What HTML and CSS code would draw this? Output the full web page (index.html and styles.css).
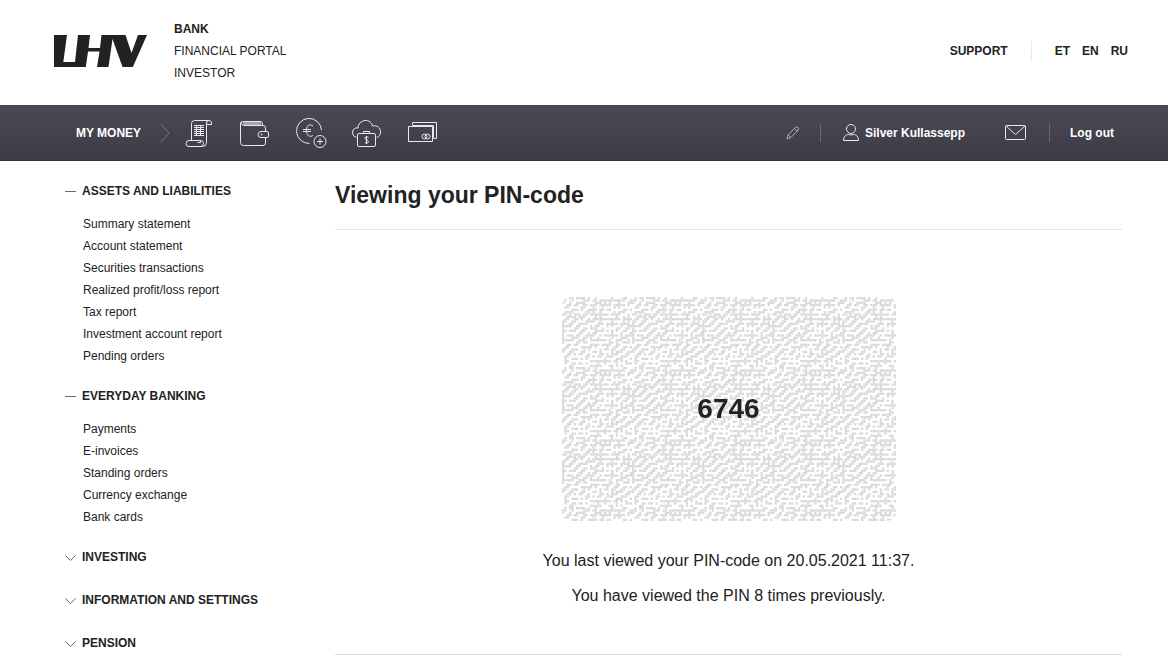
FILE: index.html
```html
<!DOCTYPE html>
<html lang="en">
<head>
  <meta charset="utf-8">
  <title>LHV - Viewing your PIN-code</title>
  <link rel="stylesheet" href="styles.css">
</head>
<body>
  <header class="header">
    <a class="logo" href="#" aria-label="LHV">
      <svg width="93" height="32" viewBox="0 0 93 32" fill="#222">
        <path d="M0 0H13L9.300 27H21L24 0H36L34.500 13H46L47.500 0H71.500L77.500 18L84 0H93L78.800 32H68.500L58.500 4L54.500 32H43L45.500 16.500H34L31.800 32H0Z"/>
      </svg>
    </a>
    <nav class="portals">
      <a class="active" href="#">BANK</a>
      <a href="#">FINANCIAL PORTAL</a>
      <a href="#">INVESTOR</a>
    </nav>
    <div class="header-right">
      <a class="support" href="#">SUPPORT</a>
      <div class="languages">
        <a href="#">ET</a>
        <a href="#">EN</a>
        <a href="#">RU</a>
      </div>
    </div>
  </header>

  <nav class="navbar">
    <a class="my-money" href="#">MY MONEY</a>
    <svg class="arrow" width="10" height="20" viewBox="0 0 10 20"><path d="M0.500 0.500L9 10L0.500 19.500"/></svg>
    <div class="shortcuts">
      <a href="#" aria-label="Account statement">
        <svg class="icon" width="32" height="32" viewBox="0 0 32 32">
          <path d="M7.500 23.500V6.500a3 3 0 0 1 3-3H25a2.500 2.500 0 0 1 2.500 2.500v1.500h-5V6a2.500 2.500 0 0 1 2.500-2.500M22.500 5v20.500a4 4 0 0 1-4 4H5a3 3 0 0 1 0-6h11.500v2h-3M16.500 23.500a3 3 0 0 1 0 6"/>
          <path d="M10 8.500h10M10 10.500h10M10 12.500h10M10 14.500h10M10 16.500h10M10 18.500h10M12.500 8v11M16.500 8v11"/>
        </svg>
      </a>
      <a href="#" aria-label="Payments">
        <svg class="icon" width="32" height="32" viewBox="0 0 32 32">
          <path d="M25.500 14V11a2.500 2.500 0 0 0-2.500-2.500H4a3.500 3.500 0 0 1-3-3.500M25.500 21v5a2.500 2.500 0 0 1-2.500 2.500H3.500A3 3 0 0 1 0.500 25.500V6.500a2 2 0 0 1 2-2H20a2.500 2.500 0 0 1 2.500 2.500v1.500"/>
          <path d="M21 14.500h6a1.500 1.500 0 0 1 1.500 1.500v3a1.500 1.500 0 0 1-1.500 1.500h-6a3 3 0 0 1 0-6Z"/>
          <path class="shade" d="M3 5h18v3H3z"/>
          <circle cx="21.500" cy="17.500" r="0.500"/>
        </svg>
      </a>
      <a href="#" aria-label="New payment">
        <svg class="icon" width="32" height="32" viewBox="0 0 32 32">
          <path d="M13.500 26.400A12.500 12.500 0 1 1 25.500 13"/>
          <path d="M17 9c-4-2.500-6.500-.5-6.500 4.500s3 7 6.500 5M7 12.500h8M7 14.500h8"/>
          <circle cx="24" cy="24.500" r="6"/>
          <path d="M21 24.500h6M24 21.500v6"/>
        </svg>
      </a>
      <a href="#" aria-label="Investments">
        <svg class="icon" width="32" height="32" viewBox="0 0 32 32">
          <path d="M4.500 20.500a5 5 0 0 1-1-9.500h2.500c0-4 3-7 7-7.500s7 2.500 7.500 5.500c5-1 8 2 8 5.500a6 6 0 0 1-4 6"/>
          <path d="M7 16.500h15a1.500 1.500 0 0 1 1.500 1.500v10a1.500 1.500 0 0 1-1.500 1.500H7a1.500 1.500 0 0 1-1.500-1.500V18A1.500 1.500 0 0 1 7 16.500ZM11.500 16v-1.500h6V16"/>
          <path d="M16.500 20.500c-2-1.500-4-.5-3.500 1s3.500 1.500 3.500 3-2 2-3.500 1M14.500 19v8"/>
        </svg>
      </a>
      <a href="#" aria-label="Bank cards">
        <svg class="icon" width="32" height="32" viewBox="0 0 32 32">
          <path d="M4.500 8V5.500h24v16h-3M4.500 8.500h21v13"/>
          <path d="M0.500 9.500h24v15h-24z"/>
          <circle cx="16.500" cy="19.500" r="2.500"/>
          <circle cx="19.500" cy="19.500" r="2.500"/>
        </svg>
      </a>
    </div>
    <div class="user-menu">
      <a class="edit" href="#" aria-label="Edit">
        <svg class="icon dim" width="14" height="14" viewBox="0 0 14 14"><path d="M1 13l1-4L10 1q2-.5 3 2L5 11.500zM8.500 2.500l3 3M2 9l3 2.500"/></svg>
      </a>
      <a class="user" href="#">
        <svg class="icon" width="16" height="18" viewBox="0 0 16 18"><circle cx="8" cy="5" r="4.500"/><path d="M0.500 16.500c0-4 2.500-6 5-6q2.500 1 5 0c2.500 0 5 2 5 6z"/></svg>
        Silver Kullassepp
      </a>
      <a class="messages" href="#" aria-label="Messages">
        <svg class="icon" width="22" height="16" viewBox="0 0 22 16"><rect x="0.500" y="0.500" width="20" height="14" rx="1"/><path d="M1 1l9.500 8.500L20 1"/></svg>
      </a>
      <a class="logout" href="#">Log out</a>
    </div>
  </nav>

  <div class="page">
    <aside class="sidebar">
      <section class="menu open">
        <button type="button" aria-expanded="true"><svg width="11" height="7" viewBox="0 0 11 7"><path d="M0 3.500h11"/></svg>ASSETS AND LIABILITIES</button>
        <ul>
          <li><a href="#">Summary statement</a></li>
          <li><a href="#">Account statement</a></li>
          <li><a href="#">Securities transactions</a></li>
          <li><a href="#">Realized profit/loss report</a></li>
          <li><a href="#">Tax report</a></li>
          <li><a href="#">Investment account report</a></li>
          <li><a href="#">Pending orders</a></li>
        </ul>
      </section>
      <section class="menu open">
        <button type="button" aria-expanded="true"><svg width="11" height="7" viewBox="0 0 11 7"><path d="M0 3.500h11"/></svg>EVERYDAY BANKING</button>
        <ul>
          <li><a href="#">Payments</a></li>
          <li><a href="#">E-invoices</a></li>
          <li><a href="#">Standing orders</a></li>
          <li><a href="#">Currency exchange</a></li>
          <li><a href="#">Bank cards</a></li>
        </ul>
      </section>
      <section class="menu">
        <button type="button" aria-expanded="false"><svg width="11" height="7" viewBox="0 0 11 7"><path d="M0.500 1.500l5 5 5-5"/></svg>INVESTING</button>
      </section>
      <section class="menu">
        <button type="button" aria-expanded="false"><svg width="11" height="7" viewBox="0 0 11 7"><path d="M0.500 1.500l5 5 5-5"/></svg>INFORMATION AND SETTINGS</button>
      </section>
      <section class="menu">
        <button type="button" aria-expanded="false"><svg width="11" height="7" viewBox="0 0 11 7"><path d="M0.500 1.500l5 5 5-5"/></svg>PENSION</button>
      </section>
    </aside>

    <main class="content">
      <h1>Viewing your PIN-code</h1>
      <div class="pin-view">
        <div class="pin-card">
          <canvas id="pin-noise" width="334" height="224"></canvas>
          <strong class="pin">6746</strong>
        </div>
        <p>You last viewed your PIN-code on 20.05.2021 11:37.</p>
        <p>You have viewed the PIN 8 times previously.</p>
      </div>
    </main>
  </div>

  <script src="noise.js"></script>
</body>
</html>
```

FILE: styles.css
```css
* {
  box-sizing: border-box;
}

body {
  margin: 0;
  background: #fff;
  color: #222;
  font-family: "Liberation Sans", Arial, sans-serif;
  font-size: 12px;
  line-height: 22px;
}

a {
  color: inherit;
  text-decoration: none;
}

svg {
  display: block;
  flex: none;
}

.header {
  display: flex;
  align-items: center;
  padding: 18px 40px 21px 54px;
}

.logo {
  margin-right: 27px;
}

.portals {
  display: flex;
  flex-direction: column;
}

.portals .active {
  font-weight: bold;
}

.header-right {
  display: flex;
  align-items: center;
  margin-left: auto;
  font-weight: bold;
}

.support {
  padding-right: 23px;
}

.languages {
  display: flex;
  gap: 12px;
  padding-left: 23px;
  border-left: 1px solid #e8e8e8;
  line-height: 20px;
}

.navbar {
  display: flex;
  align-items: center;
  height: 56px;
  padding: 0 54px 0 76px;
  background: linear-gradient(#4a4955, #3d3b46);
  border-bottom: 1px solid #34323c;
  color: #fff;
  font-weight: bold;
}

.arrow {
  margin: 0 14px 0 19px;
  fill: none;
  stroke: #777681;
}

.shortcuts {
  display: flex;
  gap: 24px;
}

.icon {
  fill: none;
  stroke: #e9e9ec;
  stroke-linejoin: round;
}

.icon .shade {
  fill: #a5a4ab;
  stroke: none;
}

.icon.dim {
  stroke: #aaa9b1;
}

.user-menu {
  display: flex;
  align-items: center;
  margin-left: auto;
}

.edit {
  padding-right: 20px;
}

.user {
  display: flex;
  align-items: center;
  gap: 6px;
  padding-left: 22px;
  border-left: 1px solid #686772;
  line-height: 18px;
}

.messages {
  padding: 1px 22px 1px 40px;
}

.logout {
  padding-left: 20px;
  border-left: 1px solid #686772;
  line-height: 18px;
}

.page {
  display: flex;
  padding: 19px 46px 8px 65px;
}

.sidebar {
  flex: 0 0 270px;
}

.menu {
  margin-bottom: 21px;
}

.menu.open {
  margin-bottom: 18px;
}

.menu button {
  display: flex;
  align-items: center;
  gap: 6px;
  padding: 0;
  border: 0;
  background: none;
  color: inherit;
  font: inherit;
  font-weight: bold;
  cursor: pointer;
}

.menu button svg {
  fill: none;
  stroke: #66656f;
}

.menu ul {
  margin: 11px 0 0;
  padding: 0 0 0 18px;
  list-style: none;
}

.content {
  flex: 1;
}

h1 {
  margin: 0;
  padding: 0 0 19px;
  border-bottom: 1px solid #e5e5e5;
  font-size: 23px;
  line-height: 30px;
}

.pin-view {
  display: flex;
  flex-direction: column;
  align-items: center;
  padding: 67px 0 34px;
  border-bottom: 1px solid #ddd;
  font-size: 16px;
}

.pin-card {
  display: grid;
  place-items: center;
  margin-bottom: 29px;
  border-radius: 9px;
  overflow: hidden;
}

.pin-card canvas,
.pin {
  grid-area: 1 / 1;
}

.pin-card canvas {
  display: block;
}

.pin {
  z-index: 1;
  font-size: 28px;
}

.pin-view p {
  margin: 0 0 13px;
}
```

FILE: noise.js
```js
const canvas = document.getElementById('pin-noise');
const ctx = canvas.getContext('2d');
const cols = 143;
const rows = 96;
const cellWidth = canvas.width / cols;
const cellHeight = canvas.height / rows;
const tile = 30;

// fixed seed, so the pattern is the same on every visit
let seed = 6746;
function random() {
  seed = (Math.imul(seed, 1664525) + 1013904223) >>> 0;
  return seed / 4294967296;
}

// no 2x2 block gets one colour, which keeps the strokes thin
const cells = [];
for (let y = 0; y < tile; y++) {
  cells.push([]);
  for (let x = 0; x < tile; x++) {
    let filled = random() < 0.5;
    if (x > 0 && y > 0) {
      const left = cells[y][x - 1];
      const up = cells[y - 1][x];
      const corner = cells[y - 1][x - 1];
      if (left === up && up === corner) {
        filled = !left;
      } else if (left === up) {
        // mostly bend the stroke instead of starting a checkerboard
        filled = random() < 0.1 ? !up : up;
      } else {
        filled = random() < 0.6 ? left : up;
      }
    }
    cells[y].push(filled);
  }
}

ctx.fillStyle = '#dadada';
for (let y = 0; y < rows; y++) {
  for (let x = 0; x < cols; x++) {
    if (cells[y % tile][x % tile]) {
      ctx.fillRect(x * cellWidth, y * cellHeight, cellWidth, cellHeight);
    }
  }
}
```
